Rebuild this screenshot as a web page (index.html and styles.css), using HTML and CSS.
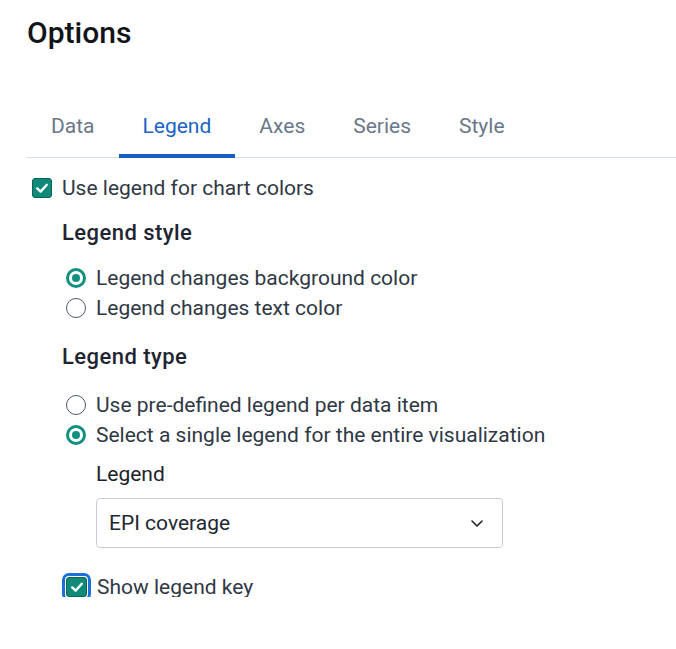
FILE: index.html
```html
<!DOCTYPE html>
<html lang="en">
<head>
<meta charset="utf-8">
<title>Options</title>
<link rel="stylesheet" href="styles.css">
</head>
<body>
<div class="panel">
  <h1 class="title">Options</h1>
  <div class="tabs">
    <div class="tab">Data</div>
    <div class="tab active">Legend</div>
    <div class="tab">Axes</div>
    <div class="tab">Series</div>
    <div class="tab">Style</div>
  </div>

  <label class="check-row top">
    <span class="checkbox"><svg viewBox="0 0 20 20" width="20" height="20"><path d="M5.2 10.4 L8.6 13.6 L14.8 6.8" fill="none" stroke="#fff" stroke-width="2.4" stroke-linecap="round" stroke-linejoin="round"/></svg></span>
    <span>Use legend for chart colors</span>
  </label>

  <div class="group">
    <div class="heading h-style">Legend style</div>
    <div class="radios">
      <div class="radio-row"><span class="radio checked"></span><span>Legend changes background color</span></div>
      <div class="radio-row"><span class="radio"></span><span>Legend changes text color</span></div>
    </div>

    <div class="heading h-type">Legend type</div>
    <div class="radios second">
      <div class="radio-row"><span class="radio"></span><span>Use pre-defined legend per data item</span></div>
      <div class="radio-row"><span class="radio checked"></span><span>Select a single legend for the entire visualization</span></div>
    </div>

    <div class="sub">
      <div class="field-label">Legend</div>
      <div class="select">
        <span>EPI coverage</span>
        <svg class="chev" viewBox="0 0 12 7" width="12" height="7"><path d="M1 1 L6 6 L11 1" fill="none" stroke="#222" stroke-width="1.6" stroke-linecap="round" stroke-linejoin="round"/></svg>
      </div>
    </div>

    <label class="check-row key">
      <span class="checkbox focused"><svg viewBox="0 0 20 20" width="20" height="20"><path d="M5.2 10.4 L8.6 13.6 L14.8 6.8" fill="none" stroke="#fff" stroke-width="2.4" stroke-linecap="round" stroke-linejoin="round"/></svg></span>
      <span>Show legend key</span>
    </label>
  </div>
</div>
</body>
</html>
```

FILE: styles.css
```css
* { box-sizing: border-box; }
html, body {
  margin: 0;
  padding: 0;
  background: #fff;
}
body {
  font-family: Roboto, "Liberation Sans", Arial, sans-serif;
  font-size: 21px;
  line-height: 24px;
  color: #2f3845;
}
.panel {
  height: 597px;
  overflow: hidden;
  padding-left: 27px;
}
.title {
  margin: 15px 0 0 0;
  font-size: 30px;
  line-height: 36px;
  font-weight: 500;
  color: #111418;
}
.tabs {
  display: flex;
  margin-top: 44px;
  border-bottom: 1px solid #d6dee6;
}
.tab {
  position: relative;
  padding: 19px 24px;
  color: #6b778a;
}
.tab.active {
  color: #1a63c4;
}
.tab.active::after {
  content: "";
  position: absolute;
  left: 0;
  right: 0;
  bottom: -1px;
  height: 4px;
  background: #1560c0;
}
.check-row {
  display: flex;
  align-items: center;
  gap: 10px;
}
.check-row.top {
  margin-top: 18px;
  padding-left: 5px;
}
.checkbox {
  width: 20px;
  height: 20px;
  border-radius: 3px;
  background: #0f8a79;
  border: 1px solid #0a6558;
  display: flex;
  align-items: center;
  justify-content: center;
  flex: none;
}
.checkbox svg { display: block; margin: -1px; }
.checkbox.focused {
  width: 21px;
  outline: 3px solid #1a6fd8;
  outline-offset: 1px;
}
.group {
  padding-left: 35px;
}
.heading {
  font-size: 22px;
  line-height: 26px;
  letter-spacing: 0.45px;
  font-weight: 500;
  color: #1f2631;
}
.h-style { margin-top: 20px; }
.h-type { margin-top: 21px; }
.radios {
  margin-top: 17px;
  padding-left: 4px;
}
.radios.second { margin-top: 20px; }
.radio-row {
  display: flex;
  align-items: center;
  gap: 10px;
  line-height: 30px;
  height: 30px;
}
.radio {
  width: 20px;
  height: 20px;
  border-radius: 50%;
  border: 1.5px solid #4d5868;
  flex: none;
  position: relative;
}
.radio.checked {
  border: 3px solid #10917f;
}
.radio.checked::after {
  content: "";
  position: absolute;
  left: 50%;
  top: 50%;
  width: 8px;
  height: 8px;
  margin: -4px 0 0 -4px;
  border-radius: 50%;
  background: #10917f;
}
.sub {
  padding-left: 34px;
}
.field-label {
  margin-top: 12px;
  color: #1d2229;
}
.select {
  margin-top: 12px;
  width: 407px;
  height: 50px;
  border: 1px solid #c8cdd5;
  border-radius: 4px;
  display: flex;
  align-items: center;
  justify-content: space-between;
  padding: 0 19px 0 12px;
  color: #222831;
}
.chev { display: block; }
.check-row.key {
  margin-top: 27px;
  padding-left: 4px;
}
```
